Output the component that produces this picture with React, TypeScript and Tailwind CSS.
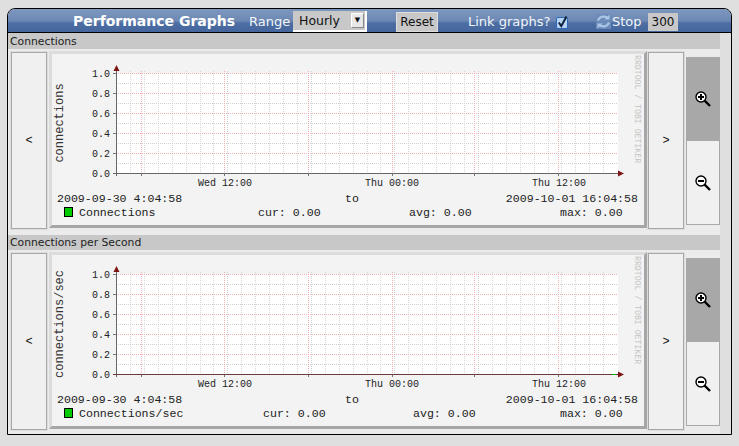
import React from 'react';

const MONO = "font-['Liberation_Mono',monospace]";

const range = (n: number) => Array.from({ length: n }, (_, i) => i);

interface GraphProps {
  yLabel: string;
  legend: string;
  curX: number;
  avgX: number;
  tail?: boolean;
}

// the rrdtool image: coordinates are relative to the inside of the frame
function Graph({ yLabel, legend, curX, avgX, tail }: GraphProps) {
  const left = 64;
  const right = 566;
  const top = 19;
  const bottom = 119;
  const major = [89.5, 172.5, 256.5, 340.5, 422.5, 506.5];
  const minors = range(36).map((i) => Math.round(left + 13.92 * i) + 0.5).filter((x) => x > left + 1);

  return (
    <svg width="592" height="171" className={`block ${MONO}`} fill="#222">
      <rect x={left} y={top} width={right - left} height={bottom - top} fill="#fff" />
      {minors.map((x) => (
        <line key={x} x1={x} x2={x} y1={top - 2} y2={bottom} stroke="#d6d6d6" strokeDasharray="1 1" />
      ))}
      {range(10).map((i) => (
        <line key={i} x1={left} x2={right} y1={top + i * 10 + 0.5} y2={top + i * 10 + 0.5} stroke={i % 2 ? '#d0d0d0' : '#f4b0b0'} strokeDasharray="1 1" />
      ))}
      {major.map((x) => (
        <g key={x}>
          <line x1={x} x2={x} y1={top - 2} y2={bottom} stroke="#f4b0b0" strokeDasharray="1 1" />
          <line x1={x} x2={x} y1={bottom} y2={bottom + 3} stroke="#777" />
        </g>
      ))}
      {range(6).map((i) => (
        <g key={i}>
          <line x1={left - 3} x2={left} y1={top + i * 20 + 0.5} y2={top + i * 20 + 0.5} stroke="#777" />
          <text x={left - 6} y={top + i * 20 + 4} textAnchor="end" fontSize="10">
            {(1 - i * 0.2).toFixed(1)}
          </text>
        </g>
      ))}
      <line x1={left + 0.5} x2={left + 0.5} y1={top - 4} y2={bottom + 3} stroke="#666" />
      <line x1={left - 3} x2={right + 2} y1={bottom + 0.5} y2={bottom + 0.5} stroke={tail ? '#6b3a3a' : '#666'} />
      {tail && <line x1={560} x2={564} y1={bottom + 0.5} y2={bottom + 0.5} stroke="#00b000" />}
      <path d={`M${left + 0.5} ${top - 8} l-3 6 h6 z`} fill="#7f1515" />
      <path d={`M${right + 6} ${bottom + 0.5} l-6 -3 v6 z`} fill="#7f1515" />

      <text transform={`translate(11 ${top + 50}) rotate(-90)`} textAnchor="middle" fontSize="12" fill="#333">
        {yLabel}
      </text>
      <text transform="translate(583 1) rotate(90)" fontSize="8.2" fill="#c4c4c4">
        RRDTOOL / TOBI OETIKER
      </text>

      <text x="146" y={bottom + 13} fontSize="10">Wed 12:00</text>
      <text x="313" y={bottom + 13} fontSize="10">Thu 00:00</text>
      <text x="480" y={bottom + 13} fontSize="10">Thu 12:00</text>

      <g fontSize="11.6">
        <text x="5" y="148">2009-09-30 4:04:58</text>
        <text x="293" y="148">to</text>
        <text x="586" y="148" textAnchor="end">2009-10-01 16:04:58</text>
        <text x="27" y="162">{legend}</text>
        <text x={curX} y="162">cur: 0.00</text>
        <text x={avgX} y="162">avg: 0.00</text>
        <text x="508" y="162">max: 0.00</text>
      </g>
      <rect x="12.5" y="153.5" width="8" height="9" fill="#00cc00" stroke="#000" />
    </svg>
  );
}

function Magnifier({ plus }: { plus?: boolean }) {
  return (
    <svg width="18" height="18" viewBox="0 0 18 18">
      <line x1="10.5" y1="10.5" x2="16" y2="16" stroke="#000" strokeWidth="2.4" />
      <circle cx="7" cy="7" r="5" fill="#fff" stroke="#000" strokeWidth="1.4" />
      <line x1="4" y1="7" x2="10" y2="7" stroke="#000" strokeWidth="2" />
      {plus && <line x1="7" y1="4" x2="7" y2="10" stroke="#000" strokeWidth="2" />}
    </svg>
  );
}

function NavButton({ label }: { label: string }) {
  return (
    <div className={`mt-px flex h-[177px] w-[36px] shrink-0 items-center justify-center border border-[#a8a8a8] bg-[#f0f0f0] text-[12px] text-[#111] shadow-[0_0_0_1px_#dcdcdc] ${MONO}`}>
      {label}
    </div>
  );
}

interface SectionProps extends GraphProps {
  title: string;
  headerClass: string;
  topClass: string;
}

function Section({ title, headerClass, topClass, ...graph }: SectionProps) {
  return (
    <section className={`h-[201px] w-[712px] bg-[#ebebeb] ${topClass}`}>
      <div className={`flex items-center bg-[#c8c8c8] pl-[2px] pt-[2px] text-[10.8px] text-[#222] ${headerClass}`}>{title}</div>
      <div className="flex pl-[3px] pt-[2px]">
        <NavButton label="<" />
        <div className="ml-[2px] h-[177px] w-[598px] shrink-0 border-[3px] border-b-[#a6a6a6] border-l-[#dcdcdc] border-r-[#a6a6a6] border-t-[#dcdcdc] bg-[#f3f3f3]">
          <Graph {...graph} />
        </div>
        <div className="ml-px">
          <NavButton label=">" />
        </div>
        <div className="ml-[2px] mt-[6px] h-[168px] w-[34px] shrink-0">
          <div className="flex h-[84px] items-center justify-center bg-[#a8a8a8]">
            <Magnifier plus />
          </div>
          <div className="flex h-[84px] items-center justify-center border border-t-0 border-[#a8a8a8] bg-[#f0f0f0]">
            <Magnifier />
          </div>
        </div>
      </div>
    </section>
  );
}

function CheckIcon() {
  return (
    <svg width="12" height="14" viewBox="0 0 12 14">
      <rect x="0.5" y="2.5" width="11" height="11" rx="1.5" fill="#b9d4f2" stroke="#2a68bb" />
      <path d="M2.8 7.5 L5.3 11 L10.5 1.5" fill="none" stroke="#10233f" strokeWidth="2" />
    </svg>
  );
}

function SyncIcon() {
  return (
    <svg width="15" height="15" viewBox="0 0 15 15" fill="none" stroke="#a9c6e6" strokeWidth="2.4">
      <rect x="0" y="0" width="15" height="15" fill="#6b8ab8" stroke="none" />
      <path d="M2 6.5 C3 3 7 1.5 11.5 3.5" />
      <path d="M13.5 0.5 v5 h-5 z" fill="#a9c6e6" stroke="none" />
      <path d="M13 8.5 C12 12 8 13.5 3.5 11.5" />
      <path d="M1.5 14.5 v-5 h5 z" fill="#a9c6e6" stroke="none" />
    </svg>
  );
}

export default function App() {
  return (
    <div className="h-[446px] w-[739px] overflow-hidden bg-[#dfdfdf] pl-[7px] pt-[8px] font-['DejaVu_Sans',sans-serif]">
      <div className="h-[427px] w-[725px] overflow-hidden rounded-t-[8px] border border-black bg-[#dfdfdf]">
        <header className="flex h-[24px] items-center border-b border-black bg-[linear-gradient(#7d97bf_0%,#6d89b4_50%,#4d6ea3_62%,#45669c_100%)] pl-[65px] pt-[2px] text-[13px] text-[#f2f5fa]">
          <span className="w-[176px] text-[14px] font-bold text-white">Performance Graphs</span>
          <span className="w-[44px]">Range</span>
          <div className="flex h-[21px] w-[74px] items-center justify-between border-b-2 border-r-2 border-white bg-[#c8c8c8] pl-[6px] pr-[1px] pt-[2px] text-[12.5px] text-[#111]">
            Hourly
            <span className="mb-[2px] flex h-[15px] w-[13px] items-center justify-center border border-b-[#888] border-l-white border-r-[#888] border-t-white bg-[#e8e8e8] text-[7px]">▼</span>
          </div>
          <div className="ml-[29px] flex h-[20px] w-[42px] items-center justify-center border border-[#ddd] bg-[#c8c8c8] text-[12px] text-[#111]">Reset</div>
          <span className="ml-[30px] w-[88px]">Link graphs?</span>
          <CheckIcon />
          <div className="ml-[28px] flex w-[16px]">
            <SyncIcon />
          </div>
          <span className="w-[36px]">Stop</span>
          <div className="flex h-[18px] w-[30px] items-center justify-center bg-[#c8c8c8] text-[12px] text-[#111]">300</div>
        </header>
        <Section title="Connections" headerClass="h-[16px]" topClass="" yLabel="connections" legend="Connections" curX={206} avgX={357} />
        <Section title="Connections per Second" headerClass="h-[15px]" topClass="pt-px" yLabel="connections/sec" legend="Connections/sec" curX={211} avgX={361} tail />
      </div>
    </div>
  );
}
